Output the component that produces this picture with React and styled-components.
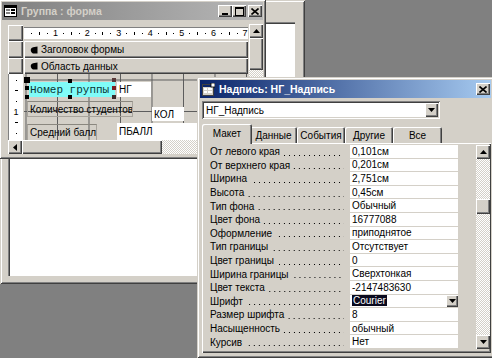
import React from "react";
import styled, { createGlobalStyle, css } from "styled-components";

const FACE = "#d4d0c8";
const SHADOW = "#808080";
const DARK = "#404040";
const LIGHT = "#ffffff";

const windowEdge = css`
  box-shadow: inset 1px 1px ${FACE}, inset -1px -1px ${DARK}, inset 2px 2px ${LIGHT}, inset -2px -2px ${SHADOW};
`;
const raisedEdge = css`
  box-shadow: inset 1px 1px ${LIGHT}, inset -1px -1px ${DARK}, inset -2px -2px ${SHADOW};
`;
const sunkenEdge = css`
  box-shadow: inset 1px 1px ${SHADOW}, inset -1px -1px ${LIGHT}, inset 2px 2px ${DARK}, inset -2px -2px ${FACE};
`;
const dither = css`
  background: repeating-conic-gradient(#ffffff 0 25%, ${FACE} 0 50%) 0 0 / 2px 2px;
`;

const Global = createGlobalStyle`
  html, body { margin: 0; padding: 0; background: ${SHADOW}; overflow: hidden; }
  #root { width: 492px; height: 358px; }
  * { box-sizing: border-box; }
`;

const Desktop = styled.div`
  position: relative;
  width: 492px;
  height: 358px;
  overflow: hidden;
  background: ${SHADOW};
  font-family: "Liberation Sans", Arial, sans-serif;
  font-size: 10px;
  color: #000;
`;

const Window = styled.div`
  position: absolute;
  left: ${(p) => p.$x}px;
  top: ${(p) => p.$y}px;
  width: ${(p) => p.$w}px;
  height: ${(p) => p.$h}px;
  background: ${FACE};
  ${windowEdge};
  padding: 3px;
  display: flex;
  flex-direction: column;
`;

const BackWindow = styled(Window)`
  padding: 22px 10px 8px 8px;
`;

const BackClient = styled.div`
  flex: 1;
  background: #fff;
  box-shadow: inset 1px 1px ${SHADOW}, inset 2px 2px ${DARK};
`;

const TitleBar = styled.div`
  height: 18px;
  flex: none;
  display: flex;
  align-items: center;
  gap: 4px;
  padding: 0 1px 0 2px;
  background: ${(p) =>
    p.$active
      ? "linear-gradient(to right, #0a246a, #a6caf0)"
      : "linear-gradient(to right, #808080, #b8b8b8)"};
`;

const TitleText = styled.span`
  font-weight: bold;
  font-size: 10.5px;
  color: ${(p) => (p.$active ? "#ffffff" : FACE)};
  white-space: nowrap;
`;

const CaptionGroup = styled.div`
  margin-left: auto;
  display: flex;
  align-items: center;
`;

const CaptionButton = styled.div`
  width: 14px;
  height: 12px;
  background: ${FACE};
  ${raisedEdge};
  display: flex;
  align-items: center;
  justify-content: center;
  margin-left: ${(p) => (p.$gap ? 2 : 0)}px;
`;

const FormBody = styled.div`
  flex: 1;
  display: grid;
  grid-template-columns: 15px 224px 14px;
  grid-template-rows: 17px 17px 16px 66px 14px;
  column-gap: 1px;
  padding: 4px 0 0 6px;
`;

const Selector = styled.div`
  grid-column: 1;
  background: ${FACE};
  ${raisedEdge};
  margin: ${(p) => (p.$top ? "1px 0 0" : "0")};
`;

const RulerWrap = styled.div`
  grid-column: 2;
  padding: 3px 0 2px;
`;

const RulerStrip = styled.div`
  height: 100%;
  background: #fff;
  border-top: 1px solid ${SHADOW};
  display: flex;
  align-items: center;
  padding-left: 4px;
  overflow: hidden;
`;

const RulerCell = styled.div`
  flex: none;
  width: 7.9px;
  display: flex;
  align-items: center;
  justify-content: center;
  font-size: 9px;
  line-height: 1;
`;

const Dot = styled.i`
  display: block;
  width: 1px;
  height: 1px;
  background: #000;
`;

const Tick = styled.i`
  display: block;
  width: ${(p) => (p.$h ? 3 : 1)}px;
  height: ${(p) => (p.$h ? 1 : 3)}px;
  background: #000;
`;

const SectionBar = styled.div`
  grid-column: 2;
  background: ${FACE};
  ${raisedEdge};
  display: flex;
  align-items: center;
  gap: 3px;
  padding-left: 6px;
  font-size: 10px;
  white-space: nowrap;
`;

const VRuler = styled.div`
  grid-column: 1;
  background: #fff;
  display: flex;
  flex-direction: column;
  padding-top: 1px;
  border-left: 1px solid ${SHADOW};
`;

const VRulerCell = styled.div`
  height: 10.6px;
  display: flex;
  align-items: center;
  justify-content: center;
  font-size: 9px;
  line-height: 1;
`;

const DetailCanvas = styled.div`
  grid-column: 2;
  position: relative;
  overflow: hidden;
  background-color: ${FACE};
  background-image: linear-gradient(to right, #5c5c5c 1px, transparent 1px),
    linear-gradient(to bottom, #5c5c5c 1px, transparent 1px);
  background-size: 31.5px 31.5px;
  background-position: 1.5px 5.5px;
`;

const Control = styled.div`
  position: absolute;
  left: ${(p) => p.$x}px;
  top: ${(p) => p.$y}px;
  width: ${(p) => p.$w}px;
  height: ${(p) => p.$h}px;
  display: flex;
  align-items: center;
  white-space: nowrap;
  overflow: hidden;
  font-size: 10px;
  padding-left: 2px;
  ${(p) =>
    p.$kind === "cyan" &&
    css`
      background: #80fcf8;
      font-family: "Liberation Mono", "Courier New", monospace;
      font-size: 11px;
      color: #0b3434;
      padding-left: 1px;
    `}
  ${(p) =>
    p.$kind === "box" &&
    css`
      background: #fff;
    `}
  ${(p) =>
    p.$kind === "label" &&
    css`
      background: transparent;
      border: 1px solid #a8a49c;
      border-top-color: #8a877f;
    `}
`;

const Handle = styled.span`
  position: absolute;
  left: ${(p) => p.$x}px;
  top: ${(p) => p.$y}px;
  width: ${(p) => (p.$big ? 6 : 4)}px;
  height: ${(p) => (p.$big ? 6 : 4)}px;
  background: ${(p) => p.$c || "#000"};
`;

const HScroll = styled.div`
  grid-column: 1 / 3;
  grid-row: 5;
  display: flex;
  ${dither};
`;

const VScroll = styled.div`
  grid-column: 3;
  grid-row: 1 / 5;
  display: flex;
  flex-direction: column;
  ${dither};
`;

const ArrowBtn = styled.div`
  flex: none;
  width: ${(p) => p.$w || 14}px;
  height: ${(p) => p.$h || 14}px;
  background: ${FACE};
  ${raisedEdge};
  display: flex;
  align-items: center;
  justify-content: center;
`;

const Thumb = styled.div`
  flex: none;
  background: ${FACE};
  ${raisedEdge};
  width: ${(p) => (p.$w ? `${p.$w}px` : "auto")};
  height: ${(p) => (p.$h ? `${p.$h}px` : "auto")};
  margin-top: ${(p) => p.$mt || 0}px;
`;

/* properties window */
const PropsBody = styled.div`
  flex: 1;
  display: flex;
  flex-direction: column;
  padding: 3px 0 2px 2px;
`;

const Combo = styled.div`
  width: 238px;
  height: 18px;
  flex: none;
  background: #fff;
  ${sunkenEdge};
  display: flex;
  align-items: center;
  padding: 2px;
  font-size: 10px;
`;

const ComboText = styled.span`
  padding-left: 2px;
  flex: 1;
`;

const TabStrip = styled.div`
  margin-top: 5px;
  height: 19px;
  flex: none;
  display: flex;
  align-items: flex-end;
  padding-left: 2px;
  position: relative;
  z-index: 1;
`;

const Tab = styled.div`
  flex: none;
  width: ${(p) => p.$w}px;
  height: 16px;
  background: ${FACE};
  box-shadow: inset 1px 1px ${LIGHT}, inset -1px 0 ${DARK}, inset -2px 0 ${SHADOW};
  border-radius: 2px 2px 0 0;
  display: flex;
  align-items: center;
  justify-content: center;
  font-size: 10px;
  padding-top: 1px;
  ${(p) =>
    p.$active &&
    css`
      height: 20px;
      margin: 0 -2px -1px;
      width: ${p.$w + 4}px;
      position: relative;
      z-index: 2;
      padding-bottom: 3px;
    `}
`;

const Panel = styled.div`
  flex: 1;
  background: ${FACE};
  ${raisedEdge};
  display: flex;
  padding: 2px 2px 3px 4px;
`;

const PropList = styled.div`
  display: grid;
  grid-template-columns: 144px 108px;
  grid-auto-rows: 13.6px;
  align-content: start;
`;

const PropLabel = styled.div`
  display: flex;
  align-items: center;
  padding-left: 4px;
  white-space: nowrap;
  overflow: hidden;
  font-size: 10px;
`;

const Leader = styled.span`
  flex: 1;
  height: 1px;
  margin: 7px 6px 0 3px;
  background-image: linear-gradient(to right, #000 1px, transparent 1px);
  background-size: 5px 1px;
  background-repeat: repeat-x;
  background-position: right;
`;

const PropValue = styled.div`
  background: #fff;
  border-bottom: 1px solid ${FACE};
  display: flex;
  align-items: center;
  padding-left: 2px;
  font-size: 10px;
  white-space: nowrap;
`;

const Selected = styled.span`
  background: #0a0a1e;
  color: #fff;
  padding: 0 1px;
  line-height: 11px;
`;

const CellDrop = styled.div`
  margin-left: auto;
  width: 12px;
  height: 12px;
  background: ${FACE};
  ${raisedEdge};
  display: flex;
  align-items: center;
  justify-content: center;
`;

const PropScroll = styled.div`
  margin-left: 18px;
  width: 14px;
  height: 204px;
  display: flex;
  flex-direction: column;
  ${dither};
`;

const Track = styled.div`
  flex: 1;
  display: flex;
  flex-direction: column;
`;

const Down = () => (
  <svg width="7" height="4" viewBox="0 0 7 4">
    <path d="M0 0h7L3.5 4z" fill="#000" />
  </svg>
);
const Up = () => (
  <svg width="7" height="4" viewBox="0 0 7 4">
    <path d="M0 4h7L3.5 0z" fill="#000" />
  </svg>
);
const Left = () => (
  <svg width="4" height="7" viewBox="0 0 4 7">
    <path d="M4 0v7L0 3.5z" fill="#000" />
  </svg>
);

const CloseGlyph = () => (
  <svg width="8" height="7" viewBox="0 0 8 7">
    <path d="M0.5 0.5l7 6M7.5 0.5l-7 6" stroke="#000" strokeWidth="1.6" />
  </svg>
);
const MinGlyph = () => (
  <svg width="8" height="8" viewBox="0 0 8 8">
    <rect x="1" y="6" width="6" height="2" fill="#000" />
  </svg>
);
const MaxGlyph = () => (
  <svg width="9" height="9" viewBox="0 0 9 9">
    <rect x="0.5" y="0.5" width="8" height="8" fill="none" stroke="#000" />
    <rect x="0" y="0" width="9" height="2" fill="#000" />
  </svg>
);

const FormIcon = () => (
  <svg width="13" height="12" viewBox="0 0 13 12">
    <rect x="0.5" y="0.5" width="12" height="11" fill="#fff" stroke="#000" />
    <rect x="1" y="1" width="11" height="2" fill="#000" />
    <rect x="2" y="4" width="4" height="2" fill="#808080" />
    <rect x="7" y="4" width="4" height="2" fill="#000" />
    <rect x="2" y="7" width="4" height="2" fill="#808080" />
    <rect x="7" y="7" width="4" height="2" fill="#000" />
  </svg>
);

const PropsIcon = () => (
  <svg width="13" height="13" viewBox="0 0 13 13">
    <rect x="0.5" y="1.5" width="11" height="11" fill="#d4d0c8" stroke="#404040" />
    <rect x="1" y="2" width="10" height="2" fill="#0a246a" />
    <rect x="2" y="5" width="3" height="2" fill="#fff" />
    <rect x="6" y="5" width="4" height="2" fill="#fff" />
    <rect x="2" y="8" width="3" height="2" fill="#fff" />
    <rect x="6" y="8" width="4" height="2" fill="#fff" />
    <rect x="9" y="0" width="4" height="4" fill="#fff" stroke="#000" strokeWidth="0.8" />
  </svg>
);

const SectionIcon = () => (
  <svg width="8" height="8" viewBox="0 0 8 8">
    <path d="M7.5 0.5V7.5H3C0.5 6.5 0 3 2 1.8 3.5 1 5.5 0.6 7.5 0.5z" fill="#000" />
  </svg>
);

const rulerMarks = Array.from({ length: 30 }, (_, i) => i + 1);
const vMarks = ["dot", "dash", "dot", "1", "dash", "dot"];

const props = [
  ["От левого края", "0,101см"],
  ["От верхнего края", "0,201см"],
  ["Ширина", "2,751см"],
  ["Высота", "0,45см"],
  ["Тип фона", "Обычный"],
  ["Цвет фона", "16777088"],
  ["Оформление", "приподнятое"],
  ["Тип границы", "Отсутствует"],
  ["Цвет границы", "0"],
  ["Ширина границы", "Сверхтонкая"],
  ["Цвет текста", "-2147483630"],
  ["Шрифт", "Courier", true],
  ["Размер шрифта", "8"],
  ["Насыщенность", "обычный"],
  ["Курсив", "Нет"],
];

const tabs = [
  ["Макет", 46],
  ["Данные", 47],
  ["События", 48],
  ["Другие", 48],
  ["Все", 49],
];

export default function App() {
  return (
    <Desktop>
      <Global />
      <BackWindow $x={0} $y={0} $w={305} $h={284}>
        <BackClient />
      </BackWindow>

      <Window $x={-1} $y={-1} $w={267} $h={160}>
        <TitleBar>
          <FormIcon />
          <TitleText>Группа : форма</TitleText>
          <CaptionGroup>
            <CaptionButton>
              <MinGlyph />
            </CaptionButton>
            <CaptionButton>
              <MaxGlyph />
            </CaptionButton>
            <CaptionButton $gap>
              <CloseGlyph />
            </CaptionButton>
          </CaptionGroup>
        </TitleBar>
        <FormBody>
          <Selector $top />
          <RulerWrap>
            <RulerStrip>
              {rulerMarks.map((k) => (
                <RulerCell key={k}>
                  {k % 4 === 0 ? k / 4 : k % 2 === 0 ? <Tick /> : <Dot />}
                </RulerCell>
              ))}
            </RulerStrip>
          </RulerWrap>

          <Selector />
          <SectionBar>
            <SectionIcon />
            Заголовок формы
          </SectionBar>

          <Selector />
          <SectionBar>
            <SectionIcon />
            Область данных
          </SectionBar>

          <VRuler>
            {vMarks.map((m, i) => (
              <VRulerCell key={i}>
                {m === "dot" ? <Dot /> : m === "dash" ? <Tick $h /> : m}
              </VRulerCell>
            ))}
          </VRuler>
          <DetailCanvas>
            <Control $kind="cyan" $x={5} $y={8} $w={86} $h={15}>
              Номер группы
            </Control>
            <Handle $big $x={0} $y={3} />
            <Handle $x={44} $y={5} />
            <Handle $x={88} $y={4} $c="#5a3a3a" />
            <Handle $x={1} $y={12} />
            <Handle $x={88} $y={12} $c="#7a2020" />
            <Handle $x={1} $y={21} />
            <Handle $x={44} $y={21} />
            <Handle $x={88} $y={21} $c="#3a2a2a" />
            <Control $kind="box" $x={93} $y={8} $w={34} $h={15}>
              НГ
            </Control>
            <Control $kind="label" $x={3} $y={27} $w={106} $h={16}>
              Количество студентов
            </Control>
            <Control $kind="box" $x={128} $y={33} $w={32} $h={14}>
              КОЛ
            </Control>
            <Control $kind="label" $x={3} $y={50} $w={70} $h={17}>
              Средний балл
            </Control>
            <Control $kind="box" $x={93} $y={49} $w={110} $h={17}>
              ПБАЛЛ
            </Control>
          </DetailCanvas>

          <VScroll>
            <ArrowBtn $w={14} $h={14}>
              <Up />
            </ArrowBtn>
            <Thumb $h={32} />
          </VScroll>

          <HScroll>
            <ArrowBtn $w={14} $h={14}>
              <Left />
            </ArrowBtn>
            <Thumb $w={140} />
          </HScroll>
        </FormBody>
      </Window>

      <Window $x={197} $y={77} $w={297} $h={281}>
        <TitleBar $active>
          <PropsIcon />
          <TitleText $active>Надпись: НГ_Надпись</TitleText>
          <CaptionGroup>
            <CaptionButton>
              <CloseGlyph />
            </CaptionButton>
          </CaptionGroup>
        </TitleBar>
        <PropsBody>
          <Combo>
            <ComboText>НГ_Надпись</ComboText>
            <ArrowBtn $w={13} $h={14}>
              <Down />
            </ArrowBtn>
          </Combo>
          <TabStrip>
            {tabs.map(([t, w], i) => (
              <Tab key={t} $w={w} $active={i === 0}>
                {t}
              </Tab>
            ))}
          </TabStrip>
          <Panel>
            <PropList>
              {props.map(([label, value, sel]) => (
                <React.Fragment key={label}>
                  <PropLabel>
                    {label}
                    <Leader />
                  </PropLabel>
                  <PropValue>
                    {sel ? (
                      <>
                        <Selected>{value}</Selected>
                        <CellDrop>
                          <Down />
                        </CellDrop>
                      </>
                    ) : (
                      value
                    )}
                  </PropValue>
                </React.Fragment>
              ))}
            </PropList>
            <PropScroll>
              <ArrowBtn>
                <Up />
              </ArrowBtn>
              <Track>
                <Thumb $h={15} $mt={40} />
              </Track>
              <ArrowBtn>
                <Down />
              </ArrowBtn>
            </PropScroll>
          </Panel>
        </PropsBody>
      </Window>
    </Desktop>
  );
}
